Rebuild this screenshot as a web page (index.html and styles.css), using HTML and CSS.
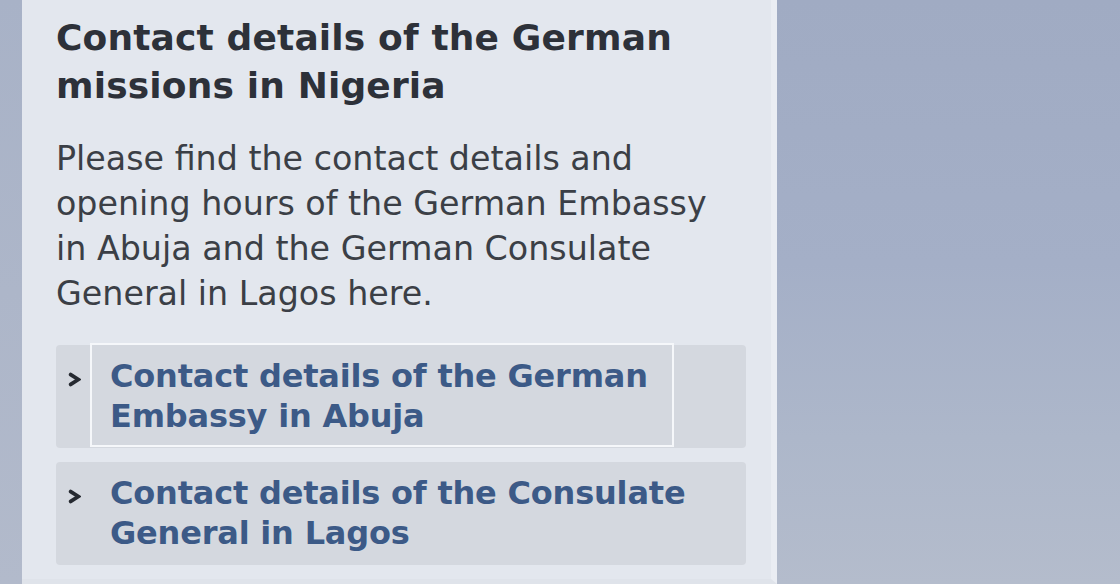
FILE: index.html
```html
<!DOCTYPE html>
<html lang="en">
<head>
<meta charset="utf-8">
<title>Contact details of the German missions in Nigeria</title>
<link rel="stylesheet" href="styles.css">
</head>
<body>
<div class="page">
  <div class="gutter"></div>
  <section class="teaser">
    <h2 class="teaser-title">Contact details of the German missions in Nigeria</h2>
    <p class="teaser-text">Please find the contact details and opening hours of the German Embassy in Abuja and the German Consulate General in Lagos here.</p>
    <ul class="link-list">
      <li class="link-item">
        <svg class="chevron" viewBox="0 0 12 15" aria-hidden="true"><polyline points="2.2,2.6 9.8,7.5 2.2,12.4"/></svg>
        <a class="link focused" href="#">Contact details of the German Embassy in Abuja</a>
      </li>
      <li class="link-item">
        <svg class="chevron" viewBox="0 0 12 15" aria-hidden="true"><polyline points="2.2,2.6 9.8,7.5 2.2,12.4"/></svg>
        <a class="link" href="#">Contact details of the Consulate General in Lagos</a>
      </li>
    </ul>
  </section>
  <div class="aside"></div>
</div>
</body>
</html>
```
FILE: styles.css
```css
html, body {
  margin: 0;
  height: 100%;
}
body {
  font-family: "DejaVu Sans", Verdana, sans-serif;
  background: #a8b2c7;
  overflow: hidden;
}
.page {
  display: flex;
  height: 584px;
}
.gutter {
  width: 22px;
  background: linear-gradient(#a8b2c7, #b2bacb);
}
.teaser {
  width: 755px;
  height: 584px;
  box-sizing: border-box;
  background: #e3e7ee;
  border-right: 6px solid #eaedf3;
  border-bottom: 5px solid #dfe3ea;
  padding: 14px 25px 0 34px;
}
.aside {
  flex: 1;
  background: linear-gradient(#a0abc3 0, #a4afc7 45%, #adb7ca 75%, #b4bccc 100%);
}
.teaser-title {
  margin: 0;
  font-size: 36px;
  line-height: 48px;
  font-weight: bold;
  letter-spacing: 0.15px;
  color: #2d3139;
}
.teaser-text {
  margin: 26px 0 0;
  font-size: 33.3px;
  line-height: 45px;
  color: #3b3f46;
}
.link-list {
  list-style: none;
  margin: 29px 0 0;
  padding: 0;
  display: flex;
  flex-direction: column;
  gap: 14px;
}
.link-item {
  display: flex;
  align-items: flex-start;
  background: #d4d8df;
  border-radius: 4px;
  height: 103px;
  padding: 0 0 0 12px;
  box-sizing: border-box;
}
.chevron {
  width: 13px;
  height: 15px;
  margin: 27px 9px 0 0;
  flex: none;
  fill: none;
  stroke: #262a31;
  stroke-width: 3.8;
  stroke-linecap: round;
  stroke-linejoin: miter;
}
.link {
  display: block;
  flex: 1;
  margin-top: -2px;
  padding: 11px 20px 9px 18px;
  border: 2px solid transparent;
  font-size: 32px;
  line-height: 40px;
  font-weight: bold;
  letter-spacing: -0.2px;
  color: #3c5a87;
  text-decoration: none;
}
.link.focused {
  flex: none;
  width: 542px;
  border-color: #f5f7fa;
}
```
